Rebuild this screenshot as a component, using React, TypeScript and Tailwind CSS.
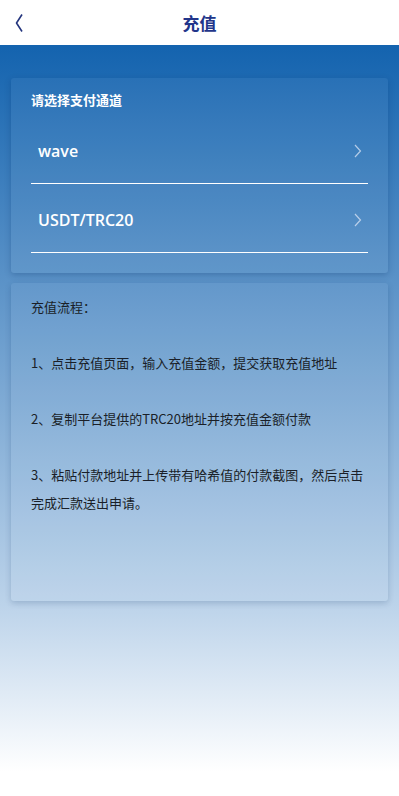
import React from 'react';

const channels = ['wave', 'USDT/TRC20'];

const steps = [
  '1、点击充值页面，输入充值金额，提交获取充值地址',
  '2、复制平台提供的TRC20地址并按充值金额付款',
  '3、粘贴付款地址并上传带有哈希值的付款截图，然后点击完成汇款送出申请。',
];

export default function App() {
  return (
    <div
      className="min-h-[796px] w-full bg-linear-to-b/srgb from-[#1262ae] from-[5%] via-[#bcd3ea] via-[76%] to-white to-[97%]"
      style={{ fontFamily: '"Noto Sans CJK SC", "Noto Sans", sans-serif' }}
    >
      {/* Header */}
      <div className="relative flex h-[45px] items-center justify-center bg-white">
        <button className="absolute left-[12px] top-[12px] flex h-[22px] w-[14px] items-center justify-center">
          <svg width="10" height="20" viewBox="0 0 10 20" fill="none">
            <path d="M8 1.5 L2.5 10 L8 18.5" stroke="#24357e" strokeWidth="1.6" strokeLinejoin="round" />
          </svg>
        </button>
        <h1 className="text-[17px] font-bold text-[#22358a]">充值</h1>
      </div>

      <div className="px-[11px] pt-[33px]">
        {/* Channels card */}
        <div className="rounded-[3px] bg-white/5 px-[20px] pt-[12px] pb-[20px] shadow-[0_2px_6px_rgba(0,40,90,0.25)]">
          <p className="mb-[5px] text-[13px] font-bold leading-[20px] text-white">请选择支付通道</p>
          {channels.map((c) => (
            <div key={c} className="flex h-[69px] items-center justify-between border-b border-white pl-[7px] pr-[6px] pt-[3px]">
              <span className="text-[16px] font-semibold text-white" style={{ fontFamily: '"Open Sans", "Noto Sans", sans-serif' }}>{c}</span>
              <svg width="8" height="14" viewBox="0 0 8 14" fill="none">
                <path d="M1 1 L6.5 7 L1 13" stroke="rgba(220,230,245,0.75)" strokeWidth="1.2" />
              </svg>
            </div>
          ))}
        </div>

        {/* Process card */}
        <div className="mt-[10px] h-[318px] rounded-[3px] bg-white/5 px-[20px] pt-[10px] shadow-[0_2px_6px_rgba(0,40,90,0.2)]">
          <p className="text-[13px] leading-[28px] text-[#1a1f28]">充值流程：</p>
          {steps.map((s) => (
            <p key={s} className="mt-[28px] text-[13px] leading-[28px] text-[#1a1f28]">{s}</p>
          ))}
        </div>
      </div>
    </div>
  );
}
